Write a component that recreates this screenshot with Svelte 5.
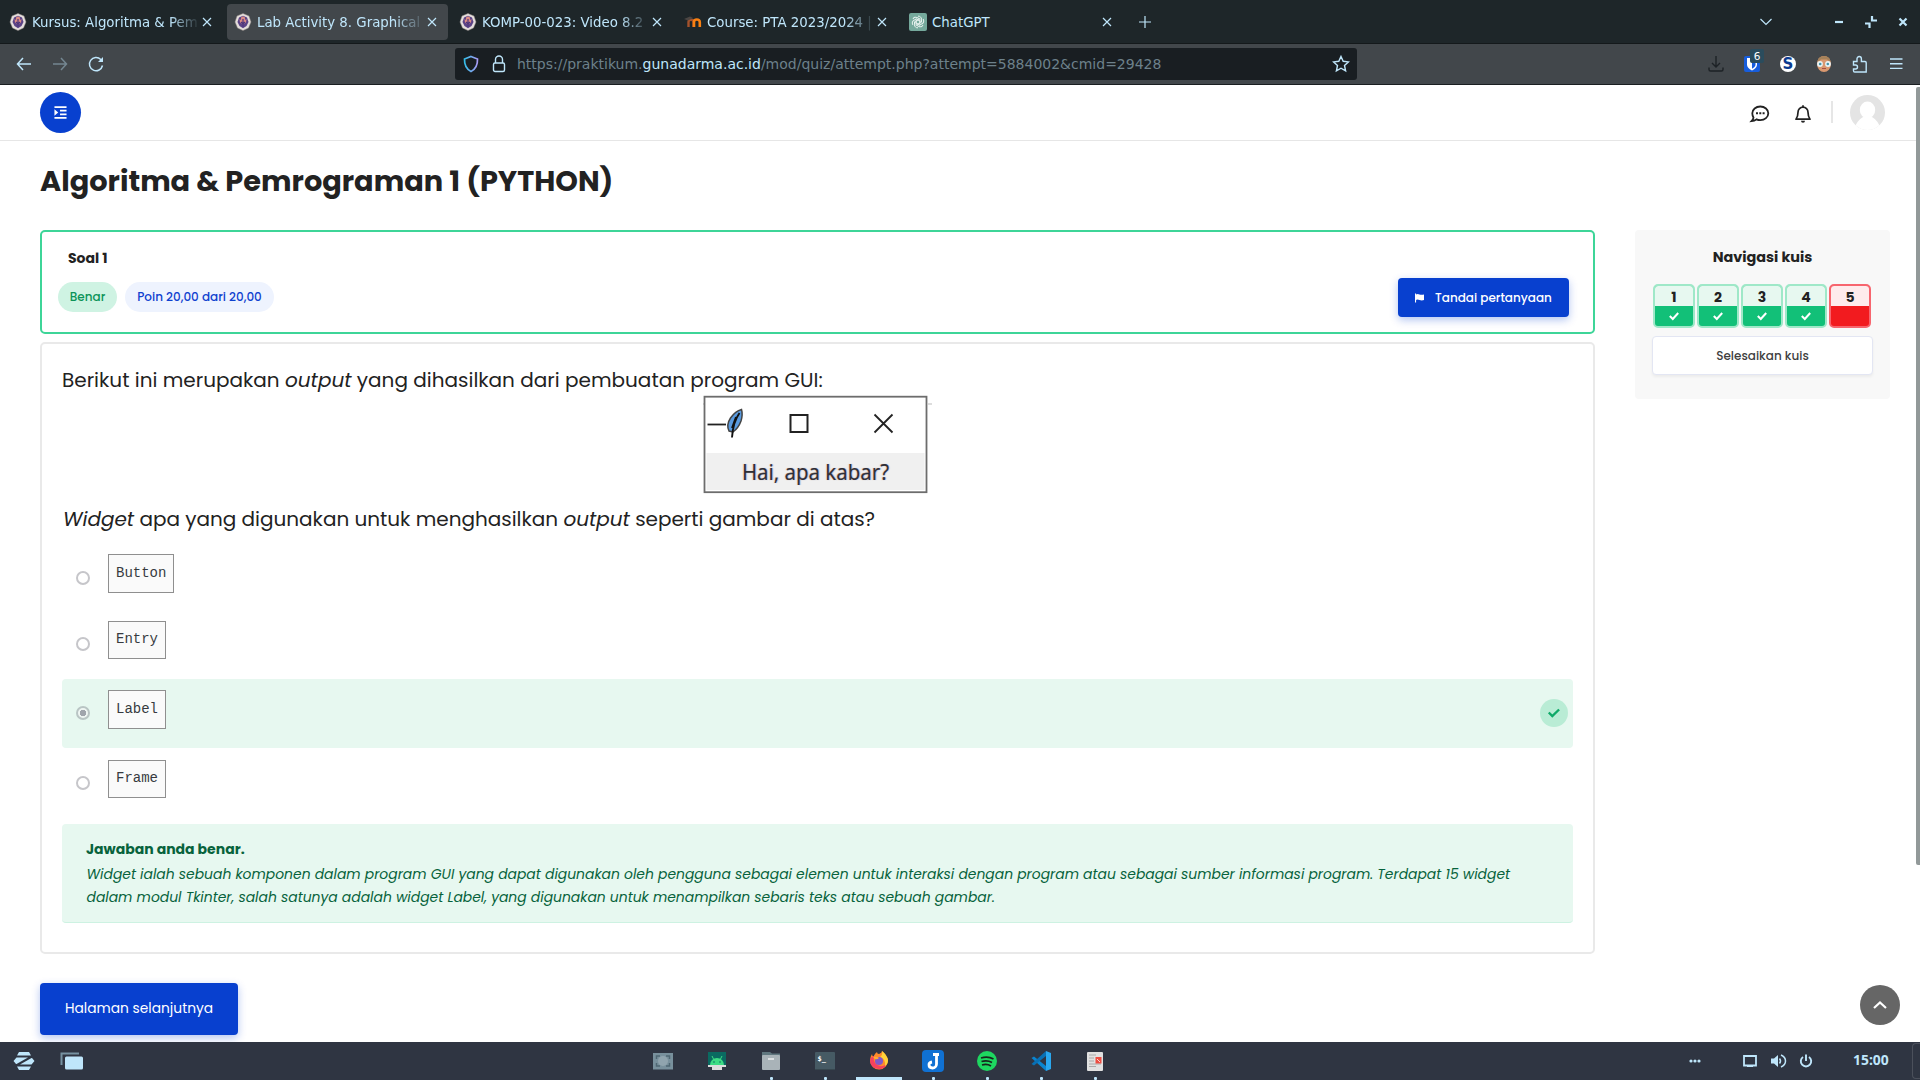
<script>
  const tabs = [
    { title: 'Kursus: Algoritma & Pem', icon: 'crest' },
    { title: 'Lab Activity 8. Graphical', icon: 'crest', active: true },
    { title: 'KOMP-00-023: Video 8.2', icon: 'crest' },
    { title: 'Course: PTA 2023/2024 |', icon: 'moodle' },
    { title: 'ChatGPT', icon: 'gpt' }
  ];
  const options = [
    { label: 'Button', row: 'r1' },
    { label: 'Entry', row: 'r2' },
    { label: 'Label', row: 'r3', chosen: true },
    { label: 'Frame', row: 'r4' }
  ];
  const questions = [1, 2, 3, 4, 5];
  const apps = ['shot', 'android', 'files', 'term', 'firefox', 'joplin', 'spotify', 'code', 'doc'];
  const petals = [0, 60, 120, 180, 240, 300];
</script>

<div class="screen">
  <div class="tabbar">
    {#each tabs as tab}
      <div class="tab" class:active={tab.active}>
        <svg class="fav" viewBox="0 0 18 18">
          {#if tab.icon === 'crest'}
            <path d="M9 .5 15 3 17 9l-2.500 6L9 17.600 3.500 15 1 9l2-6z" fill="#e4dedb" stroke="#8d8583" stroke-width=".5" />
            <path d="M9 2.800 13 4.500 14.500 9l-2 4L9 15.200 5.500 13l-2-4L5 4.500z" fill="#5b4387" />
            <path d="M5.500 6 7 7V4.500l2-1.300 2 1.300V7l1.500-1-.5 3.500L9 11.500 6 9.500z" fill="#d98a84" />
            <path d="M9 6v7.500M7 9l2 2 2-2" stroke="#4a357c" stroke-width="1.200" fill="none" />
          {:else if tab.icon === 'moodle'}
            <path d="M4.500 14V8.500M4.500 9q0-2.200 2.500-2.200T9.500 9v5" fill="none" stroke="#a5522b" stroke-width="2.400" />
            <path d="M10 14V9q0-2.500 2.800-2.500T15.800 9v5" fill="none" stroke="#f98012" stroke-width="2.600" />
            <path d="M0 6 6 3.500 9 5 4 7.500z" fill="#4c4643" />
          {:else}
            <rect width="18" height="18" rx="2" fill="#75a99c" />
            {#each petals as a}
              <path d="M9 3.200a3 3 0 0 1 3.500 3v3L8 11.500" transform="rotate({a} 9 9)" fill="none" stroke="#e9f3f0" stroke-width="1" />
            {/each}
          {/if}
        </svg>
        <span class="tabtitle" class:plain={tab.icon === 'gpt'}>{tab.title}</span>
        <svg class="close" viewBox="0 0 10 10"><path d="m1 1 8 8M9 1 1 9" /></svg>
      </div>
    {/each}
    <svg class="plus" viewBox="0 0 14 14"><path d="M7 1v12M1 7h12" /></svg>
    <div class="winctl">
      <svg class="chev" viewBox="0 0 12 8"><path d="m.5 1 5.500 5.500L11.500 1" /></svg>
      <svg class="w8" viewBox="0 0 12 12"><path d="M2 6h8" /></svg>
      <svg class="w8" viewBox="0 0 12 12"><path d="M7 0v4.500h5M0 7.500h4.500V12" /></svg>
      <svg class="w8" viewBox="0 0 12 12"><path d="m2.500 2.500 7 7M9.500 2.500l-7 7" /></svg>
    </div>
  </div>

  <div class="toolbar">
    <div class="navbtns">
      <svg viewBox="0 0 16 16"><path d="M15 8H1.500M7 2 1.500 8 7 14" /></svg>
      <svg class="dim" viewBox="0 0 16 16"><path d="M1 8h13.500M9 2l5.500 6L9 14" /></svg>
      <svg viewBox="0 0 16 16"><path d="M14.500 9.500A6.600 6.600 0 1 1 12.800 3.500L14.500 5.200" /><path d="M15 1v5h-5z" class="solid" /></svg>
    </div>
    <div class="url">
      <svg class="shield" viewBox="0 0 16 18">
        <defs><linearGradient id="sh" x1="0" x2="1"><stop offset="0" stop-color="#33bde8" /><stop offset="1" stop-color="#a99bf5" /></linearGradient></defs>
        <path d="M8 1.500 14.500 4q.3 9-6.500 12.500Q1.200 13 1.500 4z" fill="none" stroke="url(#sh)" stroke-width="1.700" />
      </svg>
      <svg class="lock" viewBox="0 0 14 18"><rect x="1.500" y="8" width="11" height="8.500" rx="1.500" /><path d="M3.500 8V4.500a3.500 3.500 0 0 1 7 0V8" /></svg>
      <span class="addr">https://praktikum.<b>gunadarma.ac.id</b>/mod/quiz/attempt.php?attempt=5884002&amp;cmid=29428</span>
      <svg class="star" viewBox="0 0 18 18"><path d="m9 1.500 2.200 4.800 5.200.6-3.900 3.600 1.100 5.300L9 13.200l-4.600 2.600 1.100-5.300L1.600 6.900l5.200-.6z" /></svg>
    </div>
    <div class="exts">
      <svg class="dl" viewBox="0 0 18 18"><path d="M9 1v10.500M5 8l4 4 4-4M2 12.500v2q0 1.500 1.500 1.500h11q1.500 0 1.500-1.500v-2" /></svg>
      <div class="bw">
        <svg viewBox="0 0 18 18"><rect x="1" y="1" width="16" height="16" rx="2" fill="#175ddc" /><path d="M4 3h10v6.500Q14 13 9 15.500 4 13 4 9.500z" /><path d="M9 4.500h3.500v5Q12.500 12 9 13.800z" /></svg>
        <span>6</span>
      </div>
      <svg viewBox="0 0 18 18"><circle cx="9" cy="9" r="8" fill="#fff" /><text x="9" y="14.200" text-anchor="middle" class="sletter">S</text></svg>
      <svg class="face" viewBox="0 0 18 18"><ellipse cx="9" cy="9" rx="7" ry="8" fill="#d9986f" /><path d="M2.500 7Q3 1 9 1t6.500 6L12 4.500H6z" /><circle cx="5" cy="9" r="2.900" fill="#e8f3f6" /><circle cx="13" cy="9" r="2.900" fill="#e8f3f6" /><circle cx="5.200" cy="9" r="1.300" fill="#4794a6" /><circle cx="12.800" cy="9" r="1.300" fill="#4794a6" /><rect x="7" y="13" width="4" height="1" fill="#a84f43" /></svg>
      <svg viewBox="0 0 18 18"><path d="M2.500 6.500H6V3.700a2.200 2.200 0 0 1 4.400 0v2.800H14a1.200 1.200 0 0 1 1.200 1.200V17H3.700a1.200 1.200 0 0 1-1.200-1.200V14h2a2 2 0 0 0 0-4h-2z" /></svg>
      <svg viewBox="0 0 18 18"><path d="M3 4h12.500M3 8.700h12.500M3 13.400h12.500" /></svg>
    </div>
  </div>

  <div class="page">
    <header>
      <div class="burger">
        <svg viewBox="0 0 14 14"><path d="M.5 1.200h13M6.500 5h7M6.500 9h7M.5 12.800h13" stroke="#fff" stroke-width="1.800" /><path d="M.5 3.600 4.500 7 .5 10.400z" fill="#fff" /></svg>
      </div>
      <div class="user">
        <svg class="chat" viewBox="0 0 20 18"><path d="M10.300 1.500c4.500 0 8 3 8 6.800s-3.500 6.900-8 6.900q-2 0-3.800-.8Q4.500 16 1.500 16.200q1.700-1.800 2-3.600Q2.300 10.700 2.300 8.300c0-3.800 3.500-6.800 8-6.800z" fill="none" stroke="#222" stroke-width="1.800" /><path d="M6 8.300h2M9.300 8.300h2M12.600 8.300h2" stroke="#222" stroke-width="2" /></svg>
        <svg class="bell" viewBox="0 0 16 18"><path d="M1 14.200Q3 11.500 3 7.200a5 5 0 0 1 10 0q0 4.300 2 7z" fill="none" stroke="#222" stroke-width="1.700" stroke-linejoin="round" /><path d="M8 .2v2" stroke="#222" stroke-width="1.700" /><path d="M6 15.700h4a2 2 0 0 1-4 0z" fill="#222" /></svg>
        <i class="sep"></i>
        <svg class="avatar" viewBox="0 0 35 35"><clipPath id="av"><circle cx="17.500" cy="17.500" r="17.500" /></clipPath><g clip-path="url(#av)"><path d="M0 0h35v35H0z" fill="#e4e4e4" /><ellipse cx="17.500" cy="15" rx="7.700" ry="8.500" fill="#fff" /><path d="M4 35q2-9 9-13h9q7 4 9 13z" fill="#fff" /></g></svg>
      </div>
    </header>

    <h1>Algoritma &amp; Pemrograman 1 (PYTHON)</h1>

    <div class="columns">
      <main>
        <section class="info">
          <h2>Soal 1</h2>
          <div class="inforow">
            <span class="pill ok">Benar</span>
            <span class="pill pts">Poin 20,00 dari 20,00</span>
            <button class="flag">
              <svg viewBox="0 0 10 10"><path d="M0 0h1.200v10H0z" /><path d="M1 1q2-1 4 0t5 0v6.300q-2.500 1-5 0T1 7.300z" /></svg>
              <span>Tandai pertanyaan</span>
            </button>
          </div>
        </section>

        <section class="question">
          <p class="q1">Berikut ini merupakan <em>output</em> yang dihasilkan dari pembuatan program GUI:</p>
          <svg class="shotimg" viewBox="0 0 230 98">
            <path d="M0 8h2M225 8h4" stroke="#bbb" />
            <rect x="1.500" y=".7" width="222" height="95.500" fill="#fff" stroke="#6d6d6d" stroke-width="1.800" />
            <rect x="3.500" y="57" width="218" height="37" fill="#f0f0f0" />
            <path d="M4.500 28.500h18.500" stroke="#222" stroke-width="1.800" />
            <path d="M38.500 13.500q1.500 5-.5 11.500-2.500 7-8 11l-4-1q-3-6 1.500-13 5-7 11-8.500z" fill="#5a9be0" stroke="#444" stroke-width="1.500" />
            <path d="M36.500 17Q30 26 29 41.500M33 21l-4 11" fill="none" stroke="#111" stroke-width="1.900" />
            <rect x="87.500" y="19" width="17" height="17" fill="none" stroke="#222" stroke-width="2" />
            <path d="m171.500 18.500 18 18M189.500 18.500l-18 18" stroke="#222" stroke-width="1.800" />
            <text x="39" y="84" textLength="147" lengthAdjust="spacingAndGlyphs">Hai, apa kabar?</text>
          </svg>
          <p class="q2"><em>Widget</em> apa yang digunakan untuk menghasilkan <em>output</em> seperti gambar di atas?</p>

          <div class="options">
            {#each options as o}
              <div class="option {o.row}" class:correct={o.chosen}>
                <i class="radio"></i>
                <code>{o.label}</code>
                {#if o.chosen}
                  <svg class="tick" viewBox="0 0 28 28"><circle cx="14" cy="14" r="14" fill="#b9ecd5" /><path d="m8.800 13.500 3.500 3.500 6.800-6.500" fill="none" stroke="#0fa968" stroke-width="2.400" /></svg>
                {/if}
              </div>
            {/each}
          </div>

          <div class="feedback">
            <strong>Jawaban anda benar.</strong>
            <em>Widget ialah sebuah komponen dalam program GUI yang dapat digunakan oleh pengguna sebagai elemen untuk interaksi dengan program atau sebagai sumber informasi program. Terdapat 15 widget</em>
            <em>dalam modul Tkinter, salah satunya adalah widget Label, yang digunakan untuk menampilkan sebaris teks atau sebuah gambar.</em>
          </div>
        </section>

        <button class="next"><span>Halaman selanjutnya</span></button>
      </main>

      <aside>
        <h3>Navigasi kuis</h3>
        <div class="cells">
          {#each questions as n}
            <div class="cell" class:wrong={n === 5}>
              <b>{n}</b>
              <span>
                {#if n !== 5}
                  <svg viewBox="0 0 10 8"><path d="m.8 4 3 3L9.200 1" /></svg>
                {/if}
              </span>
            </div>
          {/each}
        </div>
        <button class="finish"><span>Selesaikan kuis</span></button>
      </aside>
    </div>
    <i class="scroll"></i>
    <div class="top"><svg viewBox="0 0 14 8"><path d="m1 7 6-5.500L13 7" /></svg></div>
  </div>

  <div class="taskbar">
    <svg class="zorin" viewBox="0 0 22 20"><path d="M6 1h10l2 3.500H4zM4 15.500h14L16 19H6zM3.500 6.500H15L3.500 13H3L.5 10zM18.500 13.500H7L18.500 7h.500l2.500 3z" /></svg>
    <svg class="wins" viewBox="0 0 24 18"><path d="M1.500 13V1.500H19" fill="none" stroke="#7692a1" stroke-width="2" /><rect x="5" y="4.500" width="18" height="13" rx="1.500" /></svg>
    <div class="apps">
      {#each apps as app, i}
        <div class="app" class:running={i > 1} class:current={app === 'firefox'}>
          <svg viewBox="0 0 22 22">
            {#if app === 'shot'}
              <rect x="1" y="3" width="20" height="16.500" fill="#78909c" /><circle cx="11" cy="11" r="5" fill="#90a4ae" /><path d="M4.500 9V6H8M14 6h3.500v3M17.500 13v3H14M8 16H4.500v-3" fill="none" stroke="#4f6773" stroke-width="1.500" />
            {:else if app === 'android'}
              <rect x="2" y="2" width="18" height="14" fill="#0a6a61" /><path d="M4 15a7 7 0 0 1 14 0z" fill="#3ddc84" /><path d="m6 6 2 4M16 6l-2 4" stroke="#3ddc84" /><circle cx="8" cy="12" r=".8" fill="#0a6a61" /><circle cx="14" cy="12" r=".8" fill="#0a6a61" /><path d="M2 15h18v2H2zM6 17h10v3H6z" fill="#ddd" />
            {:else if app === 'files'}
              <path d="M2 2h8l2 1.500h8V9H2z" fill="#60777f" /><rect x="2" y="5" width="18" height="15" rx="1" fill="#a9b3b8" /><path d="M8 9h6" stroke="#fff" stroke-width="1.200" />
            {:else if app === 'term'}
              <rect x="1" y="2" width="20" height="18" rx="1" fill="#465a64" /><path d="M1 19h20v1H1z" fill="#37474f" /><text x="3.500" y="10.500" class="prompt">$_</text>
            {:else if app === 'firefox'}
              <path d="M11 4q3-1 3-3 5 4 6 9a9 9 0 1 1-18 1q0-4 2-7 0 2 1.500 2.500Q7 3 9 2q0 2 2 2z" fill="#ff8a2b" /><path d="M2 11a9 9 0 0 0 17 3q-7 5-12-1-2-3-1-7-4 1-4 5z" fill="#f7415e" /><path d="M14 1q5 4 6 9 0 4-3 6 1-7-5-9 3-2 2-6z" fill="#ffd43a" /><circle cx="11" cy="11" r="4" fill="#8059c9" /><path d="M5 7q4-1 6 1-2 2-4 1z" fill="#ffad32" />
            {:else if app === 'joplin'}
              <rect width="22" height="22" rx="4" fill="#1071d3" /><path d="M11 4.500h6M14.500 5v9a4 4 0 0 1-4 4q-3.500 0-3.500-3.200 0-2.300 3-2.800" fill="none" stroke="#fff" stroke-width="2.800" />
            {:else if app === 'spotify'}
              <circle cx="11" cy="11" r="10" fill="#1ed760" /><path d="M5 8q7-2 12.500 1M5.500 11.500q6-1.500 10.500 1M6 15q5-1.500 9 1" fill="none" stroke="#17251c" stroke-width="1.700" />
            {:else if app === 'code'}
              <path d="M1.500 8 4 6.500 16 16v5z" fill="#0a84cf" /><path d="M1.500 14 4 15.500 16 6V1z" fill="#0870b5" /><path d="m16 1 5 2v16l-5 2z" fill="#2aa7ee" />
            {:else}
              <rect x="3" y="2" width="16" height="19" rx="1" fill="#e1e1e1" /><path d="M5 5h7M5 8h5M5 11h5M5 14h12M5 16.500h7" stroke="#aaa" /><rect x="11.500" y="7" width="6" height="6.500" fill="#ed4e43" /><path d="m13 9 3 3" stroke="#fbd5d0" />
            {/if}
          </svg>
          <i></i>
        </div>
      {/each}
    </div>
    <div class="tray">
      <svg class="dots" viewBox="0 0 12 4"><circle cx="2" cy="2" r="1.600" /><circle cx="6" cy="2" r="1.600" /><circle cx="10" cy="2" r="1.600" /></svg>
      <svg class="t16" viewBox="0 0 16 16"><path d="M2 3h12v9.500H2z" fill="none" stroke="#bfe6fb" stroke-width="1.800" /><path d="M5 12h6v2H5z" /></svg>
      <svg class="t16" viewBox="0 0 16 16"><path d="M1 5.500h3L8 2v12l-4-3.500H1z" /><path d="M9.500 5.500q2 2.500 0 5M11 2q4.500 2 4.500 6T11 14" fill="none" stroke="#bfe6fb" stroke-width="1.500" /></svg>
      <svg class="t16" viewBox="0 0 16 16"><path d="M8 1.500v6.500M5 4a5.200 5.200 0 1 0 6 0" fill="none" stroke="#bfe6fb" stroke-width="1.900" /></svg>
      <span class="clock">15:00</span>
      <i class="edge"></i>
    </div>
  </div>
</div>

<style>
  :global(body) { margin: 0; overflow: hidden; }
  .screen { width: 1920px; height: 1080px; display: flex; flex-direction: column; overflow: hidden; background: #fff; color: #222; font-family: Poppins, Inter, sans-serif; }
  .screen * { box-sizing: border-box; }
  svg { display: block; flex: none; overflow: visible; }
  h1, h2, h3, p { margin: 0; white-space: nowrap; }
  button { font: inherit; border: 0; padding: 0; }
  span, em { white-space: nowrap; }

  .tabbar { height: 44px; flex: none; background: #1e2629; border-bottom: 1px solid #14191b; display: flex; align-items: center; padding: 1px 0 0 2px; font-family: "DejaVu Sans", sans-serif; font-size: 13.333px; color: #bfe6fb; }
  .tab { width: 221px; height: 36px; margin-right: 4px; border-radius: 4px; display: flex; align-items: center; padding: 0 11px 0 7px; }
  .tab.active { background: #42474b; }
  .fav { width: 18px; height: 18px; margin-right: 5px; }
  .tabtitle { flex: 1; overflow: hidden; line-height: 20px; padding-top: 1px; -webkit-mask-image: linear-gradient(90deg, #000 82%, transparent); mask-image: linear-gradient(90deg, #000 82%, transparent); }
  .tabtitle.plain { -webkit-mask-image: none; mask-image: none; }
  .tab .close { width: 10px; height: 10px; margin-left: 2px; }
  .close path, .plus path, .chev path, .w8 path { fill: none; stroke: #bfe6fb; stroke-width: 1.2; }
  .plus { width: 14px; height: 14px; margin-left: 11px; }
  .winctl { margin-left: auto; display: flex; align-items: center; padding-right: 11px; }
  .chev { width: 12px; height: 8px; margin-right: 61px; }
  .winctl .w8 { width: 12px; height: 12px; }
  .winctl .w8 path { stroke-width: 2.2; }
  .w8 + .w8 { margin-left: 20px; }

  .toolbar { height: 41px; flex: none; background: #42474b; border-bottom: 1px solid #1a1e21; display: flex; align-items: center; padding: 0 15px; }
  .navbtns { display: flex; gap: 20px; width: 440px; padding-left: 1px; }
  .navbtns svg { width: 16px; height: 16px; fill: none; stroke: #bfe6fb; stroke-width: 1.5; }
  .navbtns .solid { fill: #bfe6fb; stroke: none; }
  .navbtns .dim { opacity: .4; }
  .url { width: 902px; height: 32px; background: #191e22; border-radius: 3px; display: flex; align-items: center; padding: 0 7px 0 8px; font: 14px "DejaVu Sans", sans-serif; color: #6d818b; }
  .url b { font-weight: 400; color: #bfe6fb; }
  .shield { width: 16px; height: 18px; }
  .lock { width: 14px; height: 18px; margin: 0 11px 0 13px; }
  .lock *, .star path, .exts svg > path { stroke: #bfe6fb; stroke-width: 1.4; fill: none; }
  .star { width: 18px; height: 18px; margin-left: auto; }
  .exts { margin-left: auto; display: flex; gap: 18px; }
  .exts svg { width: 18px; height: 18px; }
  .exts .dl path { stroke: #1d2226; }
  .exts .face path { stroke: none; fill: #a5825a; }
  .bw { position: relative; width: 18px; height: 18px; }
  .exts .bw svg path { stroke: none; }
  .exts .bw svg path:nth-child(2) { fill: #fff; }
  .exts .bw svg path:nth-child(3) { fill: #175ddc; }
  .bw span { position: absolute; left: 7px; top: -6px; width: 14px; height: 14px; border-radius: 2px; background: #2a4c5d; color: #fff; font: 10.500px/14px "DejaVu Sans", sans-serif; text-align: center; }
  .sletter { font: bold 15px "DejaVu Sans", sans-serif; fill: #0b3a8f; }

  .page { flex: 1; min-height: 0; position: relative; overflow: hidden; }
  header { height: 56px; border-bottom: 1px solid #e6e6e6; display: flex; justify-content: space-between; padding: 7px 35px 0 40px; }
  .burger { width: 41px; height: 41px; border-radius: 50%; background: #0840cf; display: grid; place-items: center; }
  .burger svg { width: 13px; height: 13px; }
  .user { display: flex; align-items: flex-start; }
  .chat { width: 20px; height: 18px; margin-top: 13px; }
  .bell { width: 16px; height: 18px; margin: 13px 0 0 25px; }
  .sep { width: 2px; height: 22px; margin: 9px 17px 0 20px; background: #e6e6e6; }
  .avatar { width: 35px; height: 35px; margin-top: 3px; }

  h1 { font-size: 28.8px; line-height: 40px; font-weight: 700; margin: 20px 0 0 40px; height: 69px; }
  .columns { display: flex; align-items: flex-start; padding-left: 40px; gap: 40px; }
  main { width: 1555px; }
  .info { height: 104px; border: 2px solid #3dd598; border-radius: 5px; padding: 16px 24px 0 16px; }
  h2 { font-size: 14px; line-height: 20px; font-weight: 700; margin-left: 10px; }
  .inforow { display: flex; margin-top: 10px; align-items: center; height: 38px; }
  .pill { height: 30px; line-height: 30px; border-radius: 15px; font-size: 12px; font-weight: 500; text-align: center; margin-top: -1px; }
  .ok { width: 59px; background: #cff3e3; color: #0c9359; margin-right: 8px; }
  .pts { width: 149px; background: #eef3fe; color: #0f41cf; }
  .flag { margin-left: auto; width: 171px; height: 39px; border-radius: 4px; background: #0840cf; color: #fff; font-size: 12px; font-weight: 500; display: flex; align-items: center; padding: 1px 0 0 17px; gap: 11px; box-shadow: 0 3px 8px #0840cf4d; }
  .flag svg { width: 9px; height: 10px; fill: #fff; }

  .question { margin-top: 8px; height: 612px; border: 2px solid #e9e9e9; border-radius: 5px; padding: 20px 20px 0; }
  .q1, .q2 { font-size: 20px; line-height: 33px; height: 32px; }
  .shotimg { width: 230px; height: 98px; margin: 0 0 0 641px; }
  .shotimg text { font: 22px "Noto Sans", sans-serif; fill: #2e2e36; stroke: #2e2e36; stroke-width: .1px; text-shadow: -1px 0 1px #f0a04860, 1px 0 1px #4878e060; }
  .q2 { padding-left: 1px; margin-top: 9px; letter-spacing: -.015px; }
  .options { margin-top: 19px; }
  .option { display: flex; align-items: flex-start; height: 69px; padding: 11px 6px 0 14px; border-radius: 4px; }
  .r1 { height: 56px; padding-top: 0; }
  .radio { width: 14px; height: 14px; border: 2px solid #c6c6ca; border-radius: 50%; margin: 17px 18px 0 0; background: #fff; display: grid; place-items: center; }
  code { height: 39px; border: 1px solid #8f8f8f; background: #fafafa; padding: 0 7px; font: 14px/36px "Liberation Mono", monospace; color: #373a3f; }
  .r2 .radio { margin-top: 16px; }
  .r2 code { height: 38px; line-height: 34px; }
  .r4 { padding-top: 12px; }
  .r4 .radio { margin-top: 16px; }
  .r4 code { height: 38px; line-height: 34px; }
  .correct { background: #e7f8f0; padding-right: 5px; }
  .correct .radio { border-color: #b9c5c4; margin-top: 16px; background: radial-gradient(circle, #a0a5ac 0 3px, #eef5f2 3.5px); }
  .tick { width: 28px; height: 28px; margin: 9px 0 0 auto; }
  .feedback { margin-top: 7px; height: 99px; border-radius: 4px; border-bottom: 1px solid #cdf2e2; background: #e7f8f0; color: #07633c; padding: 13px 24px; font-size: 14px; display: flex; flex-direction: column; }
  .feedback strong { line-height: 24px; height: 28px; }
  .feedback em { font-size: 13.91px; line-height: 23px; align-self: flex-start; padding-left: .5px; }
  .next { margin-top: 29px; width: 198px; height: 52px; border-radius: 4px; background: #0840cf; color: #fff; font-size: 13.8px; font-weight: 400; box-shadow: 0 3px 8px #0840cf4d; }

  aside { width: 255px; height: 169px; background: #f8f8f8; border-radius: 4px; padding: 17px 17px 0; }
  h3 { font-size: 14.4px; line-height: 20px; font-weight: 700; text-align: center; }
  .cells { display: flex; gap: 2px; margin: 17px 0 8px 1px; }
  .cell { width: 42px; height: 44px; border: 2px solid #9fe8c8; border-radius: 5px; overflow: hidden; background: #12c078; }
  .cell b { display: block; height: 20px; line-height: 22px; background: #e7f8f0; text-align: center; font-size: 14px; }
  .cell span { height: 20px; display: grid; place-items: center; }
  .cell svg { width: 10px; height: 8px; fill: none; stroke: #fff; stroke-width: 2; }
  .cell.wrong { border-color: #f7656e; background: #f21b1f; }
  .cell.wrong b { background: #feebec; }
  .finish { width: 221px; height: 39px; border: 1px solid #e3e6f3; border-radius: 4px; background: #fff; color: #3f3f3f; font-size: 12px; font-weight: 500; box-shadow: 0 2px 3px #0000000d; }

  .scroll { position: absolute; right: 0; top: 2px; width: 4px; height: 778px; background: #929999; border-radius: 2px 0 0 2px; }
  .top { position: absolute; left: 1860px; top: 900px; width: 40px; height: 40px; border-radius: 50%; background: #666; display: grid; place-items: center; }
  .top svg { width: 14px; height: 8px; fill: none; stroke: #fff; stroke-width: 2.2; }

  .taskbar { height: 38px; flex: none; background: #2f3542; display: flex; align-items: center; padding-left: 13px; }
  .taskbar > svg { fill: #bfe6fb; }
  .zorin { width: 22px; height: 20px; }
  .wins { width: 24px; height: 18px; margin-left: 25px; }
  .apps { display: flex; margin-left: 552px; height: 38px; }
  .app { width: 54px; display: flex; flex-direction: column; align-items: center; justify-content: space-between; padding-top: 8px; }
  .app svg { width: 22px; height: 22px; }
  .app i { width: 3px; height: 3px; }
  .running i { background: #bfe6fb; border-radius: 1px; }
  .current i { width: 46px; border-radius: 0; }
  .prompt { font: bold 7px "DejaVu Sans Mono", monospace; fill: #fff; }
  .tray { margin-left: auto; display: flex; align-items: center; height: 38px; fill: #bfe6fb; }
  .dots { width: 12px; height: 4px; margin-right: 41px; }
  .t16 { width: 16px; height: 16px; margin-right: 12px; }
  .clock { font: bold 13.9px/18px "Open Sans", sans-serif; color: #bfe6fb; margin: -2px 0 0 27px; width: 59px; }
  .edge { width: 8px; height: 36px; border: 1px solid #4b505b; border-right: 0; border-radius: 4px 0 0 4px; }
</style>
